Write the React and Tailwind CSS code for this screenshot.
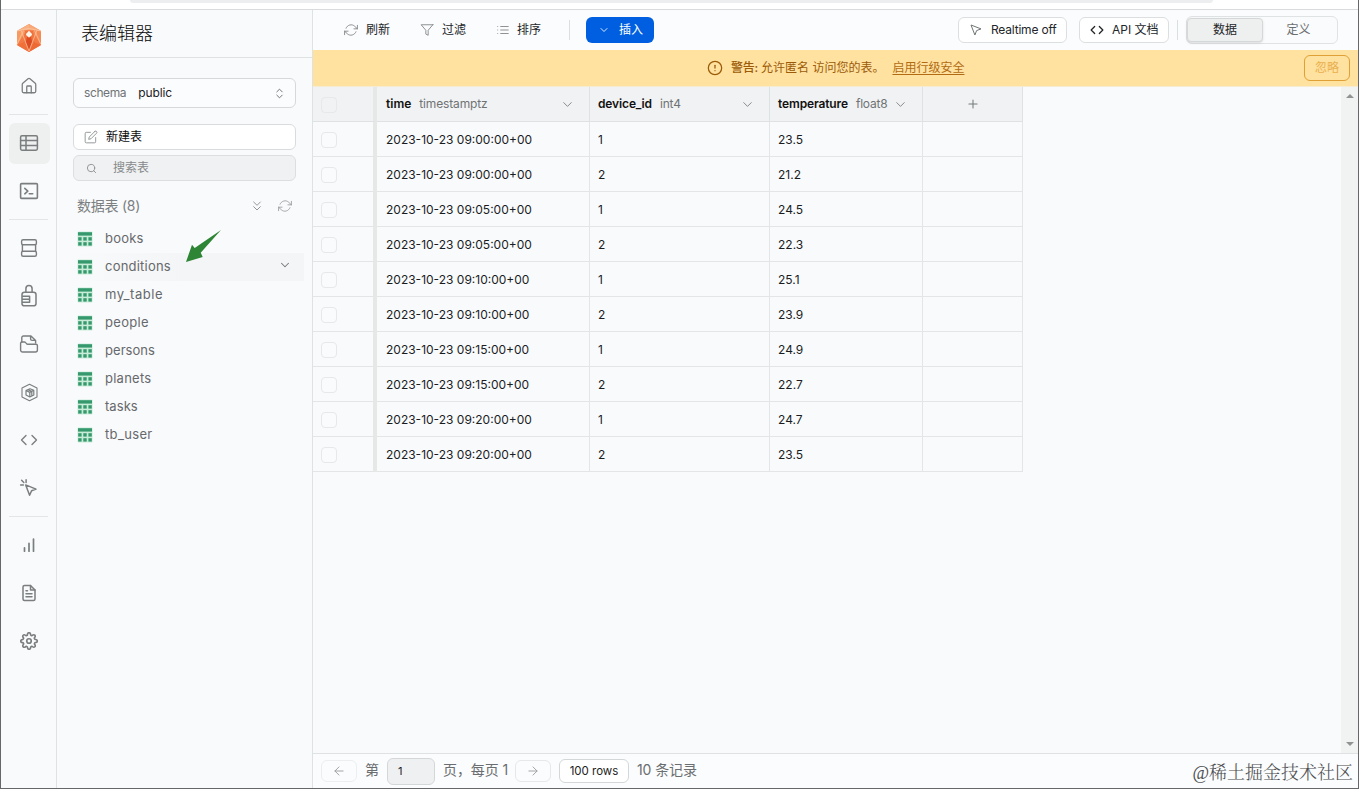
import React from "react";
import {
  House,
  ChevronDown,
  ChevronsDown,
  ChevronsUpDown,
  Plus,
  Code,
} from "lucide-react";
import {
  FiFileText,
  FiSettings,
  FiEdit,
  FiRefreshCw,
  FiFilter,
  FiList,
  FiAlertCircle,
  FiArrowLeft,
  FiArrowRight,
  FiSearch,
} from "react-icons/fi";

const tables = [
  ["books", "tracking-[0.2px]"],
  ["conditions", "tracking-[0.22px]"],
  ["my_table", "tracking-[0.55px]"],
  ["people", "tracking-[0.3px]"],
  ["persons", "tracking-[0.05px]"],
  ["planets", "tracking-[0.25px]"],
  ["tasks", "tracking-[0.05px]"],
  ["tb_user", "tracking-[0.35px]"],
];

const rows = [
  ["2023-10-23 09:00:00+00", "1", "23.5"],
  ["2023-10-23 09:00:00+00", "2", "21.2"],
  ["2023-10-23 09:05:00+00", "1", "24.5"],
  ["2023-10-23 09:05:00+00", "2", "22.3"],
  ["2023-10-23 09:10:00+00", "1", "25.1"],
  ["2023-10-23 09:10:00+00", "2", "23.9"],
  ["2023-10-23 09:15:00+00", "1", "24.9"],
  ["2023-10-23 09:15:00+00", "2", "22.7"],
  ["2023-10-23 09:20:00+00", "1", "24.7"],
  ["2023-10-23 09:20:00+00", "2", "23.5"],
];

function Glyph({ children, strokeWidth = 1.5 }) {
  return (
    <svg
      width="20"
      height="20"
      viewBox="0 0 20 20"
      fill="none"
      stroke="currentColor"
      strokeWidth={strokeWidth}
      strokeLinecap="round"
      strokeLinejoin="round"
    >
      {children}
    </svg>
  );
}

function Logo() {
  return (
    <svg width="26" height="28" viewBox="0 0 26 28">
      <polygon points="13,0 25,7 25,21 13,28 1,21 1,7" fill="#f47a45" />
      <polygon points="13,0 25,7 13,6" fill="#f9a878" />
      <polygon points="13,0 1,7 13,6" fill="#f8b183" />
      <polygon points="1,7 10,7 1,21" fill="#f79a62" />
      <polygon points="25,7 16,7 25,21" fill="#f58a55" />
      <polygon points="1,21 8,18 13,28" fill="#f0703a" />
      <polygon points="25,21 18,18 13,28" fill="#ee6a35" />
      <polygon points="9,7 17,7 18,18 13,28 8,18" fill="#f0733f" />
      <polygon points="11,13 15,13 16.2,18 13,27 9.8,18" fill="#dd4b20" />
      <path d="M5 6.2 13 27M21 6.2 13 27M1 20.5 7.5 6.5M25 20.5 18.5 6.5M1 7l12-2.6L25 7" fill="none" stroke="#fbc9a4" strokeWidth=".7" />
      <path d="M13 6.6c.8 1.8 3 2.6 3 3.9 0 1.300-2 1.700-3 3.300-1-1.600-3-2-3-3.300 0-1.300 2.200-2.100 3-3.900z" fill="#fff6ea" />
    </svg>
  );
}

const TableGlyph = () => (
  <Glyph strokeWidth={1.5}>
    <rect x="1.6" y="2.8" width="16.8" height="14.4" rx="1.4" />
    <path d="M1.6 7.6h16.8M1.6 12.4h16.8M7 2.8v14.4" />
  </Glyph>
);
const TerminalGlyph = () => (
  <Glyph strokeWidth={1.6}>
    <rect x="1.6" y="2.6" width="16.8" height="14.8" rx="1" />
    <path d="M5.8 7.4l3 2.7-3 2.7M10.3 12.8h3.4" />
  </Glyph>
);
const DatabaseGlyph = () => (
  <Glyph strokeWidth={1.4}>
    <rect x="2.6" y="1.800" width="14.800" height="5" rx="1.5" />
    <path d="M3.400 6.800v6.400M16.600 6.800v6.400" />
    <rect x="2.6" y="13.200" width="14.800" height="5" rx="1.5" />
  </Glyph>
);
const AuthGlyph = () => (
  <svg width="20" height="24" viewBox="0 0 20 24" fill="none" stroke="currentColor" strokeWidth="1.5" strokeLinejoin="round">
    <path d="M6.9 8.2V4.7a3.1 3.1 0 0 1 6.2 0v3.5" />
    <rect x="3" y="8.2" width="14" height="13.6" rx="2.4" />
    <path d="M3 12.2h7.6v6H3M3 15.2h7.6" />
  </svg>
);
const StorageGlyph = () => (
  <Glyph strokeWidth={1.4}>
    <path d="M2.8 8V3.6c0-1 .7-1.6 1.6-1.6h7.600l4.600 4.400V9M11.600 2.200v2.800c0 .9.500 1.400 1.400 1.400h3.300" />
    <path d="M1.6 9.3c0-.8.6-1.3 1.3-1.3h2.4c.6 0 1 .2 1.3.6l.9 1c.3.4.7.6 1.3.6h8.2c.8 0 1.4.6 1.4 1.4v4.4c0 1.2-.9 2-2 2h-12.800c-1.100 0-2-.8-2-2z" />
  </Glyph>
);
const EdgeGlyph = () => (
  <Glyph>
    <path d="M10.5 2.2 18 6v9l-7.5 3.8L3 15V6z" strokeWidth="1.100" />
    <path d="M11 6.7 14.8 8.3V13L10.8 15l-3.800-2V8.500zM7 8.500l3.800 1.900V15M10.800 10.400l4-2.100M9 7.700l3.800 1.700v4" strokeWidth="1.200" />
  </Glyph>
);
const PointerGlyph = () => (
  <Glyph strokeWidth={1.5}>
    <path d="M6.7 6.9l10.3 4.2-4.4 1.7-2 4.4zM7.1 1.8v2.7M1.6 6.9h2.8M2.6 2.2l2.2 2.3" />
  </Glyph>
);
const BarsGlyph = () => (
  <Glyph strokeWidth={1.700}>
    <path d="M5.5 16.2v-3.400M10 16.200V8.400M14.500 16.200V4" />
  </Glyph>
);

function NavItem({ active, children }) {
  return (
    <div className="flex h-12 shrink-0 items-center justify-center">
      <div className={`flex size-[41px] items-center justify-center rounded-md ${active ? "bg-[#eeefef]" : ""}`}>{children}</div>
    </div>
  );
}

const Divider = () => <div className="my-1 ml-[7px] mr-2 h-px shrink-0 bg-[#e3e5e6]" />;

function Rail() {
  return (
    <nav className="flex w-14 shrink-0 flex-col border-r border-[#dfe2e3] pl-px text-[#7a7e7f]">
      <div className="flex h-[52px] shrink-0 items-center justify-center pr-px pt-1">
        <Logo />
      </div>
      <NavItem><House size={18} strokeWidth={1.7} /></NavItem>
      <Divider />
      <NavItem active><TableGlyph /></NavItem>
      <NavItem><TerminalGlyph /></NavItem>
      <Divider />
      <NavItem><DatabaseGlyph /></NavItem>
      <NavItem><AuthGlyph /></NavItem>
      <NavItem><StorageGlyph /></NavItem>
      <NavItem><EdgeGlyph /></NavItem>
      <NavItem><Code size={18} strokeWidth={1.8} /></NavItem>
      <NavItem><PointerGlyph /></NavItem>
      <Divider />
      <NavItem><BarsGlyph /></NavItem>
      <NavItem><FiFileText size={18} strokeWidth={2} /></NavItem>
      <NavItem><FiSettings size={18} strokeWidth={2.2} /></NavItem>
    </nav>
  );
}

function GreenTable() {
  return (
    <svg width="16" height="16" viewBox="0 0 16 16" className="shrink-0">
      <rect x=".5" y=".5" width="15" height="15" rx="1" fill="#c9ecd9" />
      <g fill="#35996d">
        <rect x="1" y="1.2" width="14" height="3.4" />
        <rect x="1.2" y="6.2" width="3.4" height="3.4" />
        <rect x="6.3" y="6.2" width="3.4" height="3.4" />
        <rect x="11.4" y="6.2" width="3.4" height="3.4" />
        <rect x="1.2" y="11.2" width="3.4" height="3.4" />
        <rect x="6.3" y="11.2" width="3.4" height="3.4" />
        <rect x="11.4" y="11.2" width="3.4" height="3.4" />
      </g>
    </svg>
  );
}

function SidePanel() {
  return (
    <aside className="flex w-64 shrink-0 flex-col border-r border-[#dfe2e3]">
      <div className="flex h-12 shrink-0 items-center border-b border-[#dfe2e3] pl-6 text-[18px] font-light text-[#050505]">表编辑器</div>
      <div className="flex flex-col px-4 pt-5">
        <div className="flex h-[30px] items-center rounded-md border border-[#d6d9da] bg-[#fbfcfd] px-2.5 text-[12px]">
          <span className="tracking-[-0.4px] text-[#6f7375]">schema</span>
          <span className="ml-3 tracking-[-0.1px] text-[#1c2022]">public</span>
          <ChevronsUpDown size={13} strokeWidth={1.8} className="-mr-px ml-auto text-[#6f7375]" />
        </div>
        <div className="mt-4 flex h-[26px] items-center rounded-md border border-[#d9dcdd] bg-white pl-2.5 text-[12px] text-[#0c0c0c]">
          <FiEdit size={14} strokeWidth={1.4} className="text-[#808486]" />
          <span className="ml-2">新建表</span>
        </div>
        <div className="mt-[5px] flex h-[26px] items-center rounded-md border border-[#dcdfe0] bg-[#f0f1f2] pl-3 text-[12px] text-[#868a8c]">
          <FiSearch size={11} strokeWidth={1.9} />
          <span className="ml-4">搜索表</span>
        </div>
        <div className="mt-[15px] flex h-5 items-center pl-1 pr-1 text-[14px] text-[#7b7f81]">
          <span className="-mt-[2px] tracking-[-0.25px]">数据表 (8)</span>
          <ChevronsDown size={16} strokeWidth={1.4} className="ml-auto text-[#8b8f91]" />
          <FiRefreshCw size={14} strokeWidth={1.3} className="ml-[13px] text-[#8b8f91]" />
        </div>
      </div>
      <ul className="mt-[9px] flex flex-col px-3">
        {tables.map(([name, spacing]) => (
          <li
            key={name}
            className={`flex h-7 items-center pl-2 text-[13px] text-[#66696b] ${spacing} ${name === "conditions" ? "-mr-1 bg-gradient-to-r from-[#f8fafb] via-[#f4f5f6] to-[#f4f5f6]" : ""}`}
          >
            <GreenTable />
            <span className="ml-3 pb-px">{name}</span>
            {name === "conditions" && <ChevronDown size={14} strokeWidth={1.8} className="mb-1 ml-auto mr-3 text-[#74787a]" />}
          </li>
        ))}
      </ul>
    </aside>
  );
}

const CursorIcon = () => (
  <svg width="12" height="12" viewBox="0 0 12 12" fill="none" stroke="#707476" strokeWidth="1" strokeLinejoin="round">
    <path d="M1 1l10 3.9-4.4 1.7-1.7 4.4z" />
  </svg>
);

function Toolbar() {
  return (
    <div className="flex h-10 shrink-0 items-center bg-[#fbfcfd] pl-[31px] pr-5 text-[12px] text-[#232629]">
      <div className="flex w-[76px] items-center gap-2">
        <FiRefreshCw size={14} strokeWidth={1.4} className="text-[#777b7d]" />
        刷新
      </div>
      <div className="flex w-[76px] items-center gap-2">
        <FiFilter size={14} strokeWidth={1.4} className="text-[#777b7d]" />
        过滤
      </div>
      <div className="flex w-[73px] items-center gap-[7px]">
        <FiList size={14} strokeWidth={1.4} className="text-[#777b7d]" />
        排序
      </div>
      <div className="h-5 w-px bg-[#dcdfe0]" />
      <div className="ml-4 flex h-[26px] w-[68px] items-center rounded-md bg-[#005fe0] pl-3 text-white">
        <ChevronDown size={12} strokeWidth={1.7} />
        <span className="ml-[9px]">插入</span>
      </div>
      <div className="ml-auto flex h-[26px] w-[109px] items-center rounded-md border border-[#dcdfe0] bg-white pl-[11px]">
        <CursorIcon />
        <span className="ml-[9px] whitespace-nowrap tracking-[-0.2px]">Realtime off</span>
      </div>
      <div className="ml-3 flex h-[26px] w-[90px] items-center rounded-md border border-[#dcdfe0] bg-white pl-2.5">
        <Code size={14} strokeWidth={2.2} />
        <span className="ml-2 whitespace-nowrap">API 文档</span>
      </div>
      <div className="ml-2 h-5 w-px bg-[#dcdfe0]" />
      <div className="ml-2 flex h-7 w-[152px] items-center rounded-md border border-[#e0e3e4] bg-[#fafbfc]">
        <div className="flex h-6 w-[76px] items-center justify-center rounded border border-[#d5d8d9] bg-[#eeefef] shadow-sm">数据</div>
        <div className="flex-1 pr-[3px] text-center text-[#6a6e70]">定义</div>
      </div>
    </div>
  );
}

function Banner() {
  return (
    <div className="flex h-[37px] shrink-0 items-center border-b border-[#f6ecd2] bg-[#ffe1a0] pr-2 text-[12px] text-[#9b5b08]">
      <div className="ml-[394px] flex items-center">
        <FiAlertCircle size={16} strokeWidth={1.9} />
        <span className="ml-2 font-medium tracking-[-0.2px]">警告:</span>
        <span className="ml-[3px]">允许匿名 访问您的表。</span>
        <span className="ml-2 text-[#b26b10] underline underline-offset-2">启用行级安全</span>
      </div>
      <div className="ml-auto flex h-[26px] w-[46px] items-center justify-center rounded-md border border-[#dfa035] text-[#eab04e]">忽略</div>
    </div>
  );
}

const gridCols = "grid grid-cols-[64px_213px_180px_153px_100px] w-[710px]";

const Check = ({ fill }) => <div className={`mt-[2px] size-4 rounded border border-[#e6e8e9] ${fill}`} />;

function HeadCell({ name, type, first, nameClass, typeClass }) {
  return (
    <div className={`flex items-center border-b border-r border-[#dfe2e3] ${first ? "pl-[9px]" : "pl-2"}`}>
      <span className={`font-semibold text-[#111] ${nameClass}`}>{name}</span>
      <span className={`ml-2 text-[#6f7375] ${typeClass}`}>{type}</span>
      <ChevronDown size={15} strokeWidth={1.4} className="ml-auto mr-[14px] text-[#777b7d]" />
    </div>
  );
}

function Grid() {
  return (
    <div className="flex min-h-0 flex-1">
      <div className="flex-1">
        <div className={`${gridCols} h-[35px] bg-[#f1f2f3] text-[12px]`}>
          <div className="flex items-center border-b border-r-4 border-b-[#dfe2e3] border-r-[#e6e8e8] pl-2"><Check fill="bg-transparent" /></div>
          <HeadCell first name="time" type="timestamptz" nameClass="" typeClass="tracking-[-0.15px]" />
          <HeadCell name="device_id" type="int4" nameClass="tracking-[-0.13px]" typeClass="tracking-[-0.2px]" />
          <HeadCell name="temperature" type="float8" nameClass="tracking-[-0.13px]" typeClass="tracking-[-0.2px]" />
          <div className="flex items-center justify-center border-b border-r border-[#dfe2e3]">
            <Plus size={14} strokeWidth={1.8} className="text-[#777b7d]" />
          </div>
        </div>
        {rows.map((r, i) => (
          <div key={i} className={`${gridCols} h-[35px] text-[12px] text-[#1a1d1f]`}>
            <div className="flex items-center border-b border-r-4 border-b-[#e3e5e6] border-r-[#e6e8e8] pl-2"><Check fill="bg-[#fafbfc]" /></div>
            {r.map((v, j) => (
              <div key={j} className={`flex items-center whitespace-nowrap border-b border-r border-[#e3e5e6] pt-[2px] ${j === 0 ? "pl-[9px]" : "pl-2"}`}>{v}</div>
            ))}
            <div className="border-b border-r border-[#e3e5e6]" />
          </div>
        ))}
      </div>
      <div className="flex w-[17px] flex-col items-center justify-between bg-[#f1f2f2] py-[7px]">
        <svg width="8" height="4" viewBox="0 0 8 4"><path d="M0 4 4 0l4 4z" fill="#909294" /></svg>
        <svg width="8" height="4" viewBox="0 0 8 4"><path d="M0 0h8L4 4z" fill="#909294" /></svg>
      </div>
    </div>
  );
}

function Footer() {
  return (
    <div className="relative flex h-[35px] shrink-0 items-center border-t border-[#dfe2e3] bg-[#fbfcfd] pl-2 text-[14px] text-[#6a6e70]">
      <div className="flex h-[22px] w-9 items-center justify-center rounded-md border border-[#eceeef] text-[#9a9ea0]">
        <FiArrowLeft size={14} strokeWidth={1.6} />
      </div>
      <span className="-mt-[3px] ml-2">第</span>
      <div className="ml-2 flex h-[27px] w-12 items-center rounded-md border border-[#d4d7d8] bg-[#eff0f1] pl-2.5 text-[11px] text-[#222]">1</div>
      <span className="-mt-[3px] ml-2 w-[72px] whitespace-nowrap tracking-[-0.1px]">页，每页 1</span>
      <div className="flex h-[22px] w-9 items-center justify-center rounded-md border border-[#e6e8e9] text-[#9a9ea0]">
        <FiArrowRight size={14} strokeWidth={1.6} />
      </div>
      <div className="ml-2 flex h-6 w-[70px] items-center justify-center whitespace-nowrap rounded-md border border-[#d4d7d8] bg-white pt-px text-[11.5px] text-[#222]">100 rows</div>
      <span className="-mt-[3px] ml-2 tracking-[-0.1px]">10 条记录</span>
      <div className="absolute right-[5px] top-[6px] whitespace-nowrap font-['Liberation_Serif','Noto_Serif_CJK_SC','Noto_Sans_CJK_SC',serif] text-[18px] font-light leading-[26px] text-[#4c4d4f]">
        @稀土掘金技术社区
      </div>
    </div>
  );
}

export default function App() {
  return (
    <div className="relative flex h-[789px] w-[1359px] flex-col overflow-hidden border-x border-b border-[#666769] bg-[#f9fafc] font-['Inter','Noto_Sans_CJK_SC',sans-serif]">
      <div className="h-[10px] shrink-0 border-b border-[#d9dbdc] bg-white">
        <div className="ml-[129px] h-[3px] w-[1083px] rounded-b bg-[#eceef0]" />
      </div>
      <div className="flex min-h-0 flex-1">
        <Rail />
        <SidePanel />
        <main className="flex min-w-0 flex-1 flex-col">
          <Toolbar />
          <Banner />
          <Grid />
          <Footer />
        </main>
      </div>
      <svg className="absolute left-[184px] top-[229px]" width="38" height="34" viewBox="0 0 38 34">
        <polygon points="1,33 7,15.7 9.7,19 36,1 15.7,23.7 17.7,28" fill="#2e8535" />
      </svg>
    </div>
  );
}
